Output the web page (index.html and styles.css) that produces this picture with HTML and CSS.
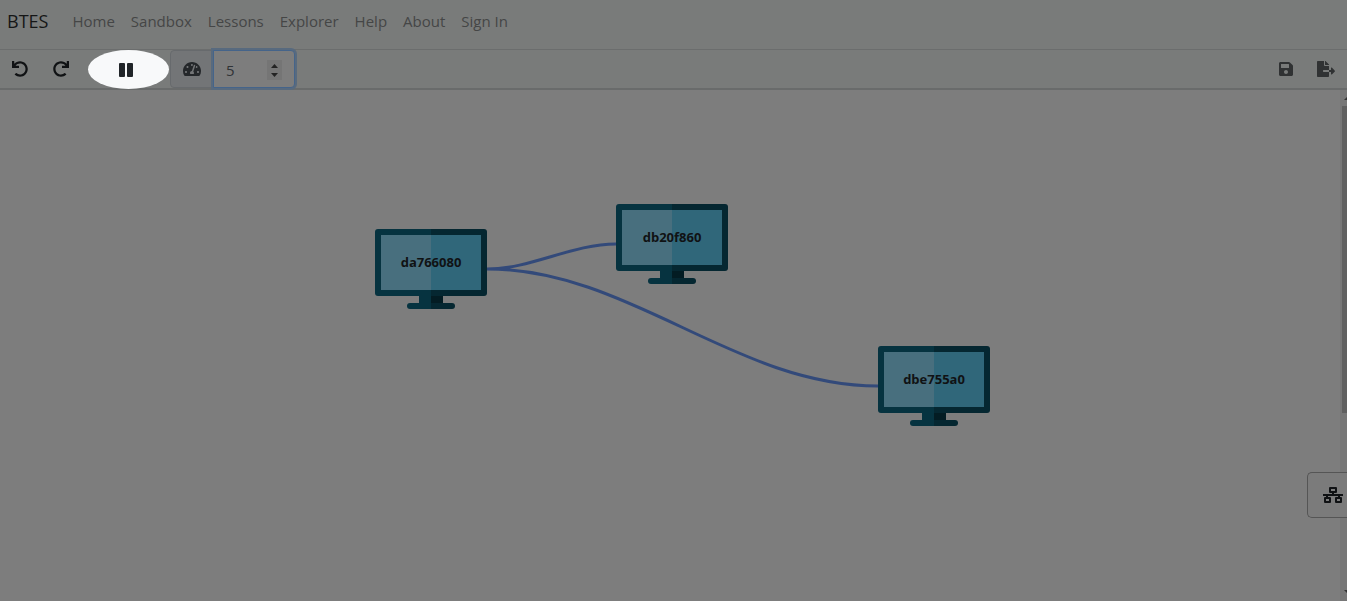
FILE: index.html
```html
<!DOCTYPE html>
<html lang="en">
<head>
<meta charset="utf-8">
<meta name="viewport" content="width=device-width, initial-scale=1">
<title>BTES</title>
<link rel="stylesheet" href="styles.css">
</head>
<body>
<svg width="0" height="0" class="defs" aria-hidden="true">
  <symbol id="undo" viewBox="0 0 512 512"><path d="M212.333 224.333H12c-6.627 0-12-5.373-12-12V12C0 5.373 5.373 0 12 0h48c6.627 0 12 5.373 12 12v78.112C117.773 39.279 184.26 7.47 258.175 8.007c136.906.994 246.448 111.623 246.157 248.532C504.041 393.258 393.12 504 256.333 504c-64.089 0-122.496-24.313-166.51-64.215-5.099-4.622-5.334-12.554-.467-17.42l33.967-33.967c4.474-4.474 11.662-4.717 16.401-.525C170.76 415.336 211.58 432 256.333 432c97.268 0 176-78.716 176-176 0-97.267-78.716-176-176-176-58.496 0-110.28 28.476-142.274 72.333h98.274c6.627 0 12 5.373 12 12v48c0 6.627-5.373 12-12 12z"/></symbol>
  <symbol id="monitor" viewBox="0 0 112 80">
    <path fill="#063340" d="M44 65h12v10H44z"/><path fill="#031c23" d="M56 65h12v10H56z"/>
    <path fill="#063340" d="M3 0h53v67H3a3 3 0 0 1-3-3V3a3 3 0 0 1 3-3z"/>
    <path fill="#052731" d="M56 0h53a3 3 0 0 1 3 3v61a3 3 0 0 1-3 3H56z"/>
    <path fill="#486f7e" d="M6 6h50v55H6z"/><path fill="#30677a" d="M56 6h50v55H56z"/>
    <path fill="#063340" d="M35 74h21v6H35a3 3 0 0 1 0-6z"/><path fill="#052731" d="M56 74h21a3 3 0 0 1 0 6H56z"/>
  </symbol>
</svg>

<nav class="navbar">
  <a class="brand" href="#">BTES</a>
  <a href="#">Home</a>
  <a href="#">Sandbox</a>
  <a href="#">Lessons</a>
  <a href="#">Explorer</a>
  <a href="#">Help</a>
  <a href="#">About</a>
  <a href="#">Sign In</a>
</nav>

<div class="toolbar">
  <button class="tool" type="button" aria-label="Undo"><svg width="16" height="16"><use href="#undo"/></svg></button>
  <button class="tool" type="button" aria-label="Redo"><svg class="mirrored" width="16" height="16"><use href="#undo"/></svg></button>
  <button class="pause" type="button" aria-label="Pause"><svg width="14" height="14" viewBox="0 0 14 14"><rect width="6" height="14" rx="1"/><rect x="8" width="6" height="14" rx="1"/></svg></button>
  <div class="speed">
    <label for="speed" aria-label="Speed"><svg width="18" height="16" viewBox="0 0 576 512"><path d="M288 32C128.94 32 0 160.94 0 320c0 52.8 14.25 102.26 39.06 144.8 5.61 9.62 16.3 15.2 27.44 15.2h443c11.14 0 21.83-5.58 27.44-15.2C561.75 422.26 576 372.8 576 320c0-159.06-128.94-288-288-288zm0 64c14.71 0 26.58 10.13 30.32 23.65-1.11 2.26-2.64 4.23-3.45 6.67l-9.22 27.67c-5.13 3.49-10.97 6.01-17.64 6.01-17.67 0-32-14.33-32-32S270.33 96 288 96zM96 384c-17.67 0-32-14.33-32-32s14.33-32 32-32 32 14.33 32 32-14.33 32-32 32zm48-160c-17.67 0-32-14.33-32-32s14.33-32 32-32 32 14.33 32 32-14.33 32-32 32zm246.77-72.41l-61.33 184C343.13 347.33 352 364.54 352 384c0 11.72-3.38 22.55-8.88 32H232.88c-5.5-9.45-8.88-20.28-8.88-32 0-33.94 26.5-61.43 59.9-63.59l61.34-184.01c4.17-12.56 17.73-19.45 30.36-15.17 12.57 4.19 19.35 17.79 15.17 30.36zm14.66 57.2l15.52-46.55c3.47-1.29 7.13-2.23 11.05-2.23 17.67 0 32 14.33 32 32s-14.33 32-32 32c-11.38-.01-20.89-6.28-26.57-15.22zM480 384c-17.67 0-32-14.33-32-32s14.33-32 32-32 32 14.33 32 32-14.33 32-32 32z"/></svg></label>
    <div class="stepper">
      <input id="speed" type="number" value="5">
      <svg class="spin" width="15" height="20" viewBox="0 0 15 20" aria-hidden="true"><path d="M4 8l3.500-4L11 8zM4 13h7l-3.500 4z"/></svg>
    </div>
  </div>
  <div class="file-tools">
    <button class="tool muted" type="button" aria-label="Save"><svg width="14" height="16" viewBox="0 0 448 512"><path d="M433.941 129.941l-83.882-83.882A48 48 0 0 0 316.118 32H48C21.490 32 0 53.490 0 80v352c0 26.510 21.490 48 48 48h352c26.510 0 48-21.490 48-48V163.882a48 48 0 0 0-14.059-33.941zM224 416c-35.346 0-64-28.654-64-64 0-35.346 28.654-64 64-64s64 28.654 64 64c0 35.346-28.654 64-64 64zm96-304.520V212c0 6.627-5.373 12-12 12H76c-6.627 0-12-5.373-12-12V108c0-6.627 5.373-12 12-12h228.520c3.183 0 6.235 1.264 8.485 3.515l3.480 3.480A11.996 11.996 0 0 1 320 111.480z"/></svg></button>
    <button class="tool muted" type="button" aria-label="Export"><svg width="18" height="16" viewBox="0 0 576 512"><path d="M384 121.900c0-6.300-2.500-12.400-7-16.900L279.100 7c-4.500-4.500-10.600-7-17-7H256v128h128zM571 308l-95.700-96.400c-10.100-10.100-27.400-3-27.400 11.300V288h-64v64h64v65.200c0 14.300 17.300 21.400 27.400 11.300L571 332c6.600-6.600 6.600-17.400 0-24zm-379 28v-32c0-8.800 7.200-16 16-16h176V160H248c-13.200 0-24-10.800-24-24V0H24C10.700 0 0 10.700 0 24v464c0 13.300 10.700 24 24 24h336c13.300 0 24-10.700 24-24V352H208c-8.800 0-16-7.200-16-16z"/></svg></button>
  </div>
</div>

<main class="workspace">
  <div class="canvas">
    <svg class="edges" aria-hidden="true"><path d="M487 179C531 179 572 154 616 154M487 179C630 179 735 296 878 296"/></svg>
    <div class="node node-a"><svg><use href="#monitor"/></svg><span>da766080</span></div>
    <div class="node node-b"><svg><use href="#monitor"/></svg><span>db20f860</span></div>
    <div class="node node-c"><svg><use href="#monitor"/></svg><span>dbe755a0</span></div>
  </div>
  <div class="scrollbar" aria-hidden="true">
    <svg width="7" height="16" viewBox="0 0 7 16"><path d="M4 10l3-3v3z"/></svg>
    <div class="track"><div class="thumb"></div></div>
    <svg width="7" height="16" viewBox="0 0 7 16"><path d="M4 5h3v3z"/></svg>
  </div>
  <button class="network" type="button" aria-label="Network"><svg width="20" height="16" viewBox="0 0 20 16"><path fill-rule="evenodd" d="M7 0h6q1 0 1 1v4q0 1-1 1h-2v1h9v2h-3v1h1q1 0 1 1v4q0 1-1 1h-5q-1 0-1-1v-4q0-1 1-1h2V9H5v1h2q1 0 1 1v4q0 1-1 1H2q-1 0-1-1v-4q0-1 1-1h1V9H0V7h9V6H7q-1 0-1-1V1q0-1 1-1zM8 2v2h4V2zM3 12v2h3v-2zM14 12v2h3v-2z"/></svg></button>
</main>
</body>
</html>
```

FILE: styles.css
```css
* { box-sizing: border-box; }
body {
  margin: 0;
  min-height: 100vh;
  display: flex;
  flex-direction: column;
  overflow: hidden;
  background: #7d7d7d;
  color: #101214;
  font-family: "Open Sans", "Noto Sans", sans-serif;
  font-size: 15px;
}
.defs { position: absolute; }
svg { display: block; fill: currentColor; }
button { border: 0; padding: 0; background: none; color: inherit; font: inherit; }

.navbar {
  display: flex;
  align-items: center;
  gap: 16px;
  height: 50px;
  padding: 0 7px 8px;
  background: #797b7a;
  border-bottom: 1px solid #6b6d6d;
}
.navbar a { color: #454646; text-decoration: none; }
.navbar .brand { margin-right: 8px; color: #151616; font-size: 18px; }

.toolbar {
  display: flex;
  height: 40px;
  background: #797b7a;
  border-bottom: 2px solid #696b6b;
}
.tool { display: flex; align-items: center; padding: 0 13px 0 12px; }
.mirrored { transform: scaleX(-1); }
.muted { color: #303233; padding: 0 12px; }
.file-tools { display: flex; margin-left: auto; }
.pause {
  display: flex;
  align-items: center;
  justify-content: center;
  width: 81px;
  height: 39px;
  margin: 0 1px 0 6px;
  padding-right: 5px;
  border-radius: 50%;
  background: #f8f9fa;
  color: #212529;
  z-index: 1;
}
.speed { display: flex; }
.speed label {
  display: flex;
  align-items: center;
  padding: 0 11px 0 12px;
  border: 1px solid #676a6d;
  border-radius: 4px 0 0 4px;
  background: #737577;
  color: #24272a;
}
.stepper { display: flex; position: relative; }
.stepper input {
  width: 82px;
  padding: 2px 12px 0 12px;
  border: 1px solid #45648a;
  border-radius: 0 4px 4px 0;
  outline: 0;
  background: #7d7d7d;
  box-shadow: 0 0 0 2px #586a7e;
  color: #303336;
  font: inherit;
  appearance: textfield;
}
.spin { position: absolute; right: 13px; top: 10px; background: #757575; color: #222; }

.workspace { position: relative; display: flex; flex: 1; }
.canvas { position: relative; flex: 1; }
.edges { position: absolute; inset: 0; width: 100%; height: 100%; }
.edges path { fill: none; stroke: #334a7a; stroke-width: 3; }
.node {
  position: absolute;
  width: 112px;
  height: 80px;
  font-size: 13px;
  font-weight: 700;
  line-height: 67px;
  text-align: center;
}
.node svg { position: absolute; inset: 0; width: 100%; height: 100%; }
.node span { position: relative; }
.node-a { left: 375px; top: 139px; }
.node-b { left: 616px; top: 114px; }
.node-c { left: 878px; top: 256px; }

.scrollbar { display: flex; flex-direction: column; width: 7px; background: #777; color: #333; }
.track { flex: 1; padding-left: 2px; }
.thumb { height: 64%; background: #606060; }
.network {
  position: absolute;
  right: 0;
  bottom: 83px;
  width: 40px;
  height: 46px;
  padding-left: 15px;
  border: 1px solid #555;
  border-right: 0;
  border-radius: 5px 0 0 5px;
  background: #7b7b7b;
}
```
